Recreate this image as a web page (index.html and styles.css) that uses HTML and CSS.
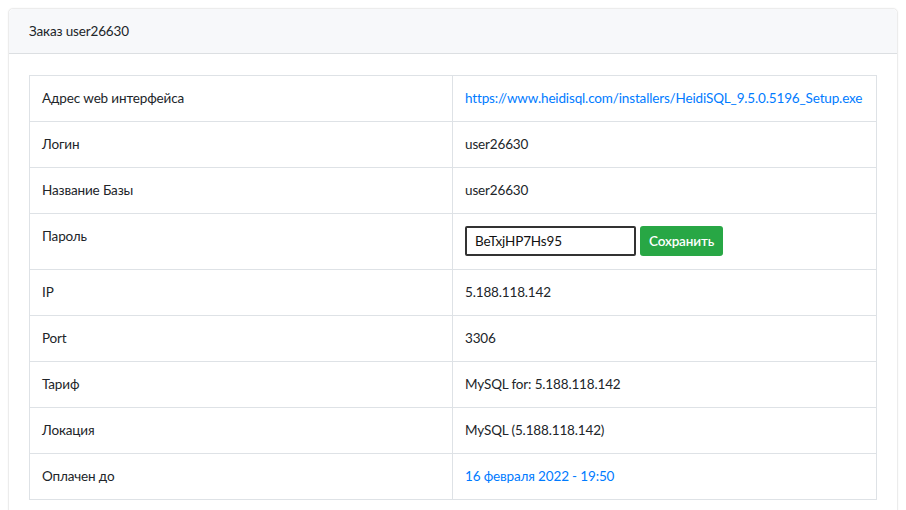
FILE: index.html
```html
<!DOCTYPE html>
<html lang="ru">
<head>
<meta charset="utf-8">
<link rel="stylesheet" href="styles.css">
</head>
<body>
<div class="card">
  <div class="card-header">Заказ user26630</div>
  <div class="card-body">
    <table class="info">
      <colgroup><col class="col-label"><col></colgroup>
      <tr><td>Адрес web интерфейса</td><td><a href="#">https://www.heidisql.com/installers/HeidiSQL_9.5.0.5196_Setup.exe</a></td></tr>
      <tr><td>Логин</td><td>user26630</td></tr>
      <tr><td>Название Базы</td><td>user26630</td></tr>
      <tr class="pw-row"><td>Пароль</td><td><div class="pw"><input class="pw-input" type="text" value="BeTxjHP7Hs95"><button class="btn-save">Сохранить</button></div></td></tr>
      <tr><td>IP</td><td>5.188.118.142</td></tr>
      <tr><td>Port</td><td>3306</td></tr>
      <tr><td>Тариф</td><td>MySQL for: 5.188.118.142</td></tr>
      <tr><td>Локация</td><td>MySQL (5.188.118.142)</td></tr>
      <tr><td>Оплачен до</td><td><a href="#">16 февраля 2022 - 19:50</a></td></tr>
    </table>
  </div>
</div>
</body>
</html>
```
FILE: styles.css
```css
html, body {
  margin: 0;
  padding: 0;
  background: #fff;
}
body {
  padding: 8px;
  font-family: "Lato", "Liberation Sans", sans-serif;
  font-size: 13.5px;
  letter-spacing: -0.15px;
  line-height: 21px;
  color: #212529;
}
.card {
  border: 1px solid #ececec;
  border-radius: 5px;
  box-shadow: 0 0 2px rgba(0,0,0,0.06);
  background: #fff;
}
.card-header {
  background: #f7f8fa;
  border-bottom: 1px solid #dcdfe2;
  border-radius: 5px 5px 0 0;
  padding: 12px 20px 11px;
  line-height: 21px;
}
.card-body {
  padding: 21px 20px 20px;
}
.info {
  width: 100%;
  border-collapse: collapse;
  table-layout: fixed;
}
.col-label {
  width: 423px;
}
.info td {
  border: 1px solid #dee2e6;
  padding: 12px;
  vertical-align: top;
  line-height: 21px;
}
.info a {
  color: #007bff;
  text-decoration: none;
}
.pw {
  display: flex;
  gap: 4px;
  align-items: center;
}
.pw-row td {
  padding-top: 12px;
  padding-bottom: 13px;
}
.pw-input {
  box-sizing: border-box;
  width: 171px;
  height: 30px;
  border: 2px solid #333;
  border-radius: 2px;
  padding: 0 8px;
  font: inherit;
  letter-spacing: inherit;
  color: #111;
}
.btn-save {
  box-sizing: border-box;
  height: 30px;
  width: 83px;
  border: none;
  border-radius: 3px;
  background: #28a745;
  color: #fff;
  font: inherit;
  letter-spacing: inherit;
  font-weight: 600;
  padding: 0;
}
```
